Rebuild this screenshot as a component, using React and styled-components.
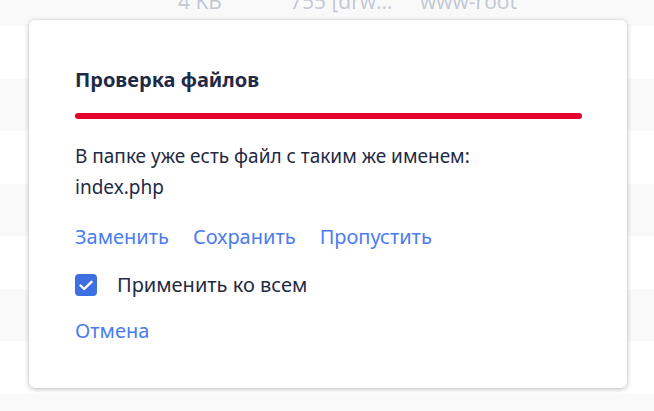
import React from 'react'
import styled, {createGlobalStyle} from 'styled-components'

const Global = createGlobalStyle`
    html, body {
        margin: 0;
        padding: 0;
        background: #ffffff;
        overflow: hidden;
    }
    body {
        font-family: "Noto Sans", "Open Sans", sans-serif;
    }
`

const Page = styled.div`
    position: relative;
    width: 654px;
    height: 411px;
    overflow: hidden;
`

const Table = styled.div`
    margin-top: -26.5px;
`

const Row = styled.div`
    display: grid;
    grid-template-columns: 178px 112px 130px 1fr;
    align-items: center;
    height: 52.5px;
    background: ${p => (p.$odd ? '#ffffff' : '#f9f9fa')};
    font-family: "Open Sans", sans-serif;
    font-size: 21px;
    line-height: 28px;
    color: #c3c8d4;
`

const Cell = styled.div`
    white-space: nowrap;
    overflow: hidden;
    text-overflow: ellipsis;
    padding-right: 26px;
    padding-top: 2px;
`

const Modal = styled.div`
    position: absolute;
    left: 29px;
    top: 20px;
    width: 598px;
    height: 368px;
    box-sizing: border-box;
    padding: 46px 45px 0 46px;
    background: #ffffff;
    border-radius: 6px;
    box-shadow: 0 1px 5px rgba(0, 0, 0, 0.28);
    display: flex;
    flex-direction: column;
    color: #1f2a44;
`

const Title = styled.h2`
    margin: 0;
    font-size: 20px;
    font-weight: 700;
    line-height: 28px;
    color: #1f2a47;
`

const Bar = styled.div`
    height: 6px;
    margin-top: 19px;
    border-radius: 3px;
    background: #e4002b;
`

const Message = styled.p`
    margin: 22px 0 0;
    font-size: 19px;
    line-height: 31px;
`

const Actions = styled.div`
    display: flex;
    gap: 24px;
    margin-top: 21px;
`

const LinkButton = styled.button`
    padding: 0;
    border: 0;
    background: none;
    font-family: inherit;
    font-size: 20px;
    line-height: 26px;
    color: #4b7cf0;
    cursor: pointer;
`

const CheckRow = styled.label`
    display: flex;
    align-items: center;
    gap: 20px;
    margin-top: 22px;
    font-size: 20px;
    line-height: 26px;
`

const Box = styled.span`
    width: 22px;
    height: 22px;
    border-radius: 4px;
    background: #3e6fe0;
    display: flex;
    align-items: center;
    justify-content: center;
`

const Cancel = styled(LinkButton)`
    align-self: flex-start;
    margin-top: 20px;
`

const rows = [
    ['4 KB', '755 [drwxr-xr-x]', 'www-root'],
    ['', '', ''],
    ['', '', ''],
    ['', '', ''],
    ['', '', ''],
    ['', '', ''],
    ['', '', ''],
    ['', '', ''],
    ['', '', ''],
]

export default function App() {
    return (
        <Page>
            <Global />
            <Table>
                {rows.map((r, i) => (
                    <Row key={i} $odd={i % 2 === 1}>
                        <span />
                        <Cell>{r[0]}</Cell>
                        <Cell>{r[1]}</Cell>
                        <Cell>{r[2]}</Cell>
                    </Row>
                ))}
            </Table>
            <Modal>
                <Title>Проверка файлов</Title>
                <Bar />
                <Message>
                    В папке уже есть файл с таким же именем:
                    <br />
                    index.php
                </Message>
                <Actions>
                    <LinkButton>Заменить</LinkButton>
                    <LinkButton>Сохранить</LinkButton>
                    <LinkButton>Пропустить</LinkButton>
                </Actions>
                <CheckRow>
                    <Box>
                        <svg width="14" height="11" viewBox="0 0 14 11">
                            <path d="M1.5 5.5 L5.2 9 L12.5 1.8" fill="none" stroke="#fff" strokeWidth="2.4" strokeLinecap="round" strokeLinejoin="round" />
                        </svg>
                    </Box>
                    Применить ко всем
                </CheckRow>
                <Cancel>Отмена</Cancel>
            </Modal>
        </Page>
    )
}
